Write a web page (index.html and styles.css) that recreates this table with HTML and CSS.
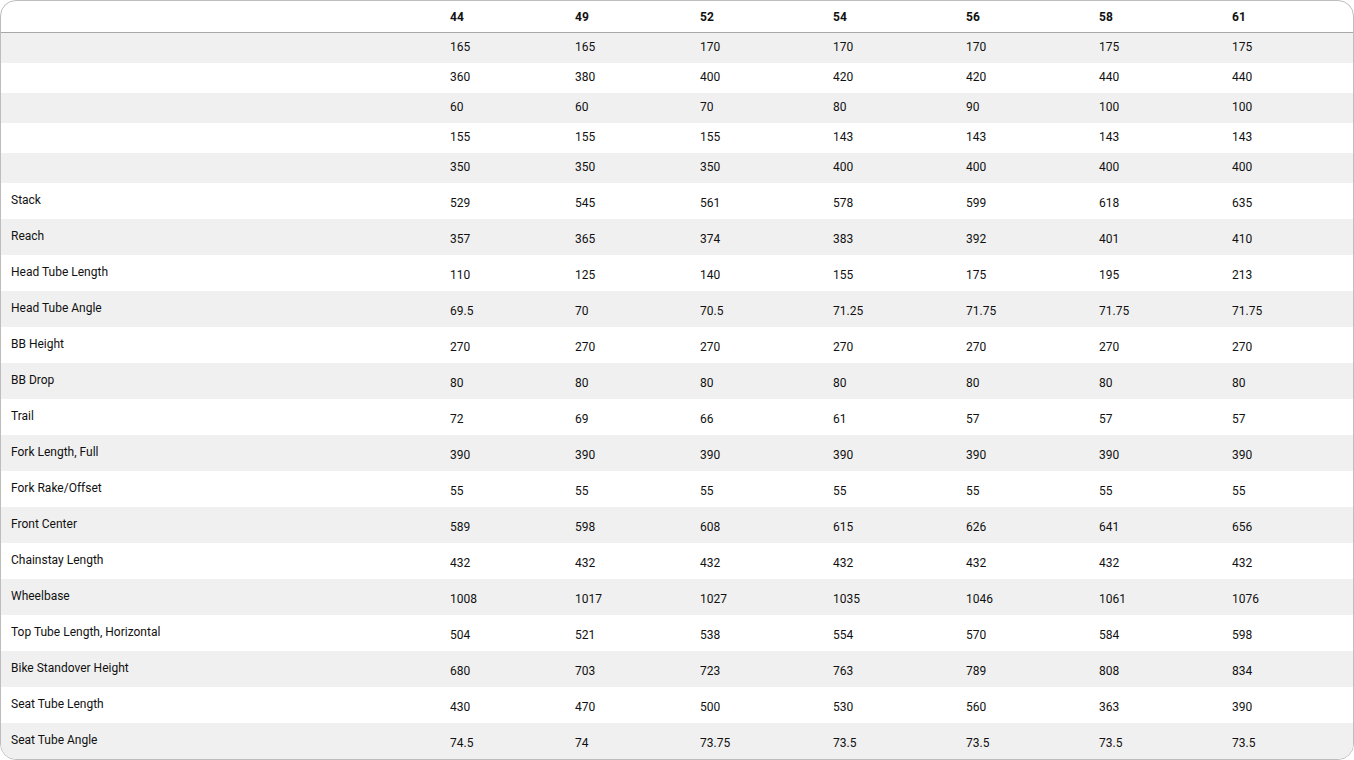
FILE: index.html
```html
<!DOCTYPE html>
<html>
<head>
<meta charset="utf-8">
<link rel="stylesheet" href="styles.css">
</head>
<body>
<table class="geo">
<colgroup>
<col class="c-label"><col class="c-a"><col class="c-a"><col class="c-b"><col class="c-b"><col class="c-b"><col class="c-b"><col class="c-last">
</colgroup>
<thead>
<tr><th></th><th>44</th><th>49</th><th>52</th><th>54</th><th>56</th><th>58</th><th>61</th></tr>
</thead>
<tbody>
<tr class="short"><td></td><td>165</td><td>165</td><td>170</td><td>170</td><td>170</td><td>175</td><td>175</td></tr>
<tr class="short"><td></td><td>360</td><td>380</td><td>400</td><td>420</td><td>420</td><td>440</td><td>440</td></tr>
<tr class="short"><td></td><td>60</td><td>60</td><td>70</td><td>80</td><td>90</td><td>100</td><td>100</td></tr>
<tr class="short"><td></td><td>155</td><td>155</td><td>155</td><td>143</td><td>143</td><td>143</td><td>143</td></tr>
<tr class="short"><td></td><td>350</td><td>350</td><td>350</td><td>400</td><td>400</td><td>400</td><td>400</td></tr>
<tr><td>Stack</td><td>529</td><td>545</td><td>561</td><td>578</td><td>599</td><td>618</td><td>635</td></tr>
<tr><td>Reach</td><td>357</td><td>365</td><td>374</td><td>383</td><td>392</td><td>401</td><td>410</td></tr>
<tr><td>Head Tube Length</td><td>110</td><td>125</td><td>140</td><td>155</td><td>175</td><td>195</td><td>213</td></tr>
<tr><td>Head Tube Angle</td><td>69.5</td><td>70</td><td>70.5</td><td>71.25</td><td>71.75</td><td>71.75</td><td>71.75</td></tr>
<tr><td>BB Height</td><td>270</td><td>270</td><td>270</td><td>270</td><td>270</td><td>270</td><td>270</td></tr>
<tr><td>BB Drop</td><td>80</td><td>80</td><td>80</td><td>80</td><td>80</td><td>80</td><td>80</td></tr>
<tr><td>Trail</td><td>72</td><td>69</td><td>66</td><td>61</td><td>57</td><td>57</td><td>57</td></tr>
<tr><td>Fork Length, Full</td><td>390</td><td>390</td><td>390</td><td>390</td><td>390</td><td>390</td><td>390</td></tr>
<tr><td>Fork Rake/Offset</td><td>55</td><td>55</td><td>55</td><td>55</td><td>55</td><td>55</td><td>55</td></tr>
<tr><td>Front Center</td><td>589</td><td>598</td><td>608</td><td>615</td><td>626</td><td>641</td><td>656</td></tr>
<tr><td>Chainstay Length</td><td>432</td><td>432</td><td>432</td><td>432</td><td>432</td><td>432</td><td>432</td></tr>
<tr><td>Wheelbase</td><td>1008</td><td>1017</td><td>1027</td><td>1035</td><td>1046</td><td>1061</td><td>1076</td></tr>
<tr><td>Top Tube Length, Horizontal</td><td>504</td><td>521</td><td>538</td><td>554</td><td>570</td><td>584</td><td>598</td></tr>
<tr><td>Bike Standover Height</td><td>680</td><td>703</td><td>723</td><td>763</td><td>789</td><td>808</td><td>834</td></tr>
<tr><td>Seat Tube Length</td><td>430</td><td>470</td><td>500</td><td>530</td><td>560</td><td>363</td><td>390</td></tr>
<tr><td>Seat Tube Angle</td><td>74.5</td><td>74</td><td>73.75</td><td>73.5</td><td>73.5</td><td>73.5</td><td>73.5</td></tr>
</tbody>
</table>
</body>
</html>
```
FILE: styles.css
```css
html, body {
  margin: 0;
  padding: 0;
  background: #ffffff;
}
.geo {
  width: 1354px;
  table-layout: fixed;
  border-collapse: separate;
  border-spacing: 0;
  border: 1px solid #bdbdbd;
  border-radius: 16px;
  overflow: hidden;
  font-family: Roboto, "Liberation Sans", sans-serif;
  font-size: 12px;
  color: #111111;
}
.c-label { width: 439px; }
.c-a { width: 125px; }
.c-b { width: 133px; }
.c-last { width: 131px; }
.geo th, .geo td {
  padding: 0 0 0 10px;
  text-align: left;
  white-space: nowrap;
  line-height: 14px;
  vertical-align: middle;
}
.geo thead tr { height: 32px; }
.geo thead th {
  padding-top: 1px;
  font-weight: 700;
  border-bottom: 1px solid #a8a8a8;
}
.geo tbody tr { height: 36px; }
.geo tbody tr.short { height: 30px; }
.geo tbody td {
  padding-top: 4px;
}
.geo tbody td:first-child {
  padding-top: 0;
  padding-bottom: 3px;
}
.geo tbody tr.short td {
  padding-top: 0;
  padding-bottom: 2px;
}
.geo tbody tr:nth-child(odd) td {
  background: #f0f0f0;
}
```
